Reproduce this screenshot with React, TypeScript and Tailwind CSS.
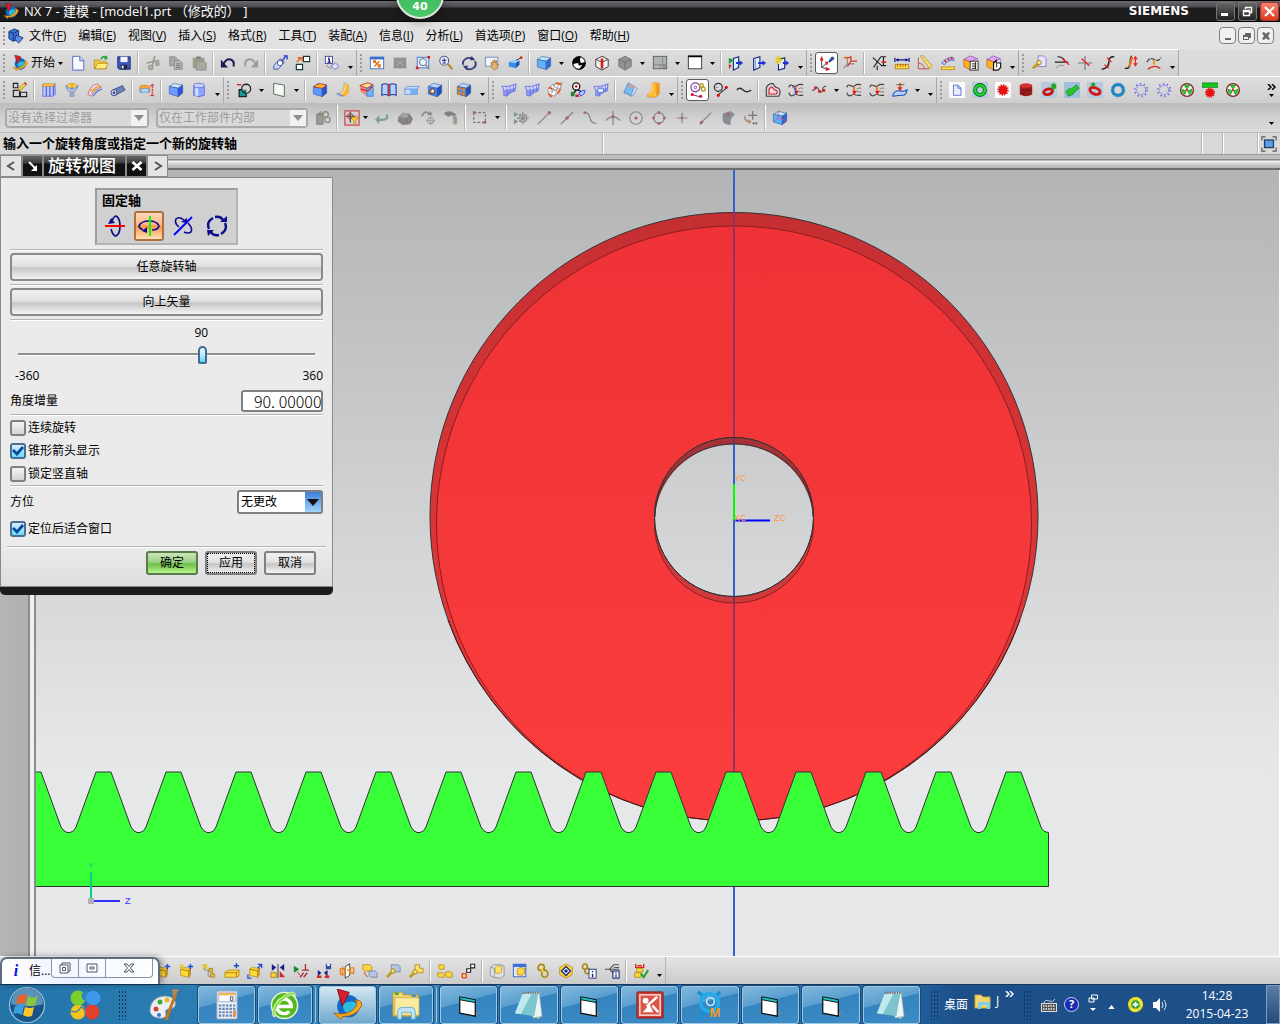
import { useState } from 'react'
import type { ReactNode } from 'react'
import clsx from 'clsx'

const NAVY = '#0c0c8c'

function cube(top: string, left: string, right: string): ReactNode {
  return (
    <g stroke="#2b4f8c" strokeWidth=".6">
      <path d="M1.500 5L7 1.500 16.500 3.500 11.500 7z" fill={top} />
      <path d="M1.500 5L11.500 7V16.500L1.500 13.500z" fill={left} />
      <path d="M11.500 7L16.500 3.500V12.500L11.500 16.500z" fill={right} />
    </g>
  )
}

const magenta3d = (
  <>
    <path d="M1 5L8 1l8 3-7 4z" fill="#d9a6f0" stroke="#8a3ca8" strokeWidth=".7" />
    <path d="M1 5l8 3v9l-8-4z" fill="#ffb51e" stroke="#c43a1a" strokeWidth=".7" />
    <path d="M9 8l7-4v9l-7 4z" fill="#f6e2ee" stroke="#8a3ca8" strokeWidth=".7" />
  </>
)

const surface = (
  <>
    <path d="M1 5q8 1 16-3l-1 8q-6 1-9 6l-4-1q1-6-2-10z" fill="#8f98f6" stroke="#6068e0" strokeWidth=".8" />
    <path d="M2 5.500q8 1 14-2l-.5 3q-7 3-12 2z" fill="#e4e8ff" opacity=".8" />
    <path d="M6 5.500q2 4 1 10M10 5q1 4 0 8M14 4v7" fill="none" stroke="#5058d8" strokeWidth=".7" />
  </>
)

const curveS = (
  <g fill="none">
    <path d="M1 6q1-4 4-2t5 0 7-1M1 12q1 5 5 3t4-1 7 1" stroke="#444" strokeWidth="1.300" />
    <path d="M17 7q-4-1-5 1M17 11q-3 1-6-1" stroke="#777" strokeWidth="1" />
    <path d="M9 5v9" stroke="#f06a1a" strokeWidth="2" />
    <path d="M7 10h5l-2.500 4z" fill="#d11" />
  </g>
)

const dottedGear = (
  <g fill="none" stroke="#6a6af0">
    <circle cx="9" cy="9" r="5.200" strokeDasharray="2 1" />
    <circle cx="9" cy="9" r="7" strokeWidth="2" strokeDasharray="1.600 2.800" />
  </g>
)

const wheel = (
  <>
    <circle cx="9" cy="9" r="7.200" fill="#eef5ee" stroke="#7c2626" strokeWidth="1.500" />
    <path d="M9 8L6 4A6 6 0 0 1 12 4zM10 10l4.500-2a6 6 0 0 1-3 6zM8 10l-1.500 4a6 6 0 0 1-3-6z" fill="#2bc82b" stroke="#1c7a1c" strokeWidth=".6" />
    <circle cx="9" cy="9" r="1.500" fill="#d33" />
  </>
)

const globe = (
  <>
    <circle cx="9.500" cy="10" r="6.500" fill="#1269c7" />
    <path d="M6 9q4-3 8-1 1 4-3 7-4 0-5-6z" fill="#2bbce0" />
    <path d="M1 14q9 2 13-4 1-3-1-3.500 5-.5 4 3.500-3 6-11 6l-1 1.500z" fill="#f6a821" stroke="#a35d09" strokeWidth=".5" />
    <path d="M3 0l7 2-4 8z" fill="#d4202c" stroke="#7d0b16" strokeWidth=".5" />
  </>
)

const yellowBox = (
  <>
    <path d="M3 7l3-2 8 1-2 3zM3 7v7l9 2V9z" fill="#ffd93b" stroke="#a77c0c" strokeWidth=".7" />
    <path d="M12 9l2-3v7l-2 3z" fill="#d9a516" stroke="#a77c0c" strokeWidth=".7" />
  </>
)

const greenDisc = (
  <>
    <rect width="18" height="18" x="0" fill="#b5cbdd" />
    <circle cx="9" cy="9" r="5.500" fill="none" stroke="#0b5f14" strokeWidth="4.500" />
    <circle cx="9" cy="9" r="5.500" fill="none" stroke="#1ddd2e" strokeWidth="2.600" />
  </>
)

const glyphs: Record<string, ReactNode> = {
  nx: globe,
  newDoc: <><path d="M3 1.500h8l4.500 4.500v11H3z" fill="#f7f9ff" stroke="#4c62c4" /><path d="M11 1.500v5h4.500" fill="#cfd8ff" stroke="#4c62c4" /></>,
  open: <><path d="M1.500 15.500v-10h5l1.500 2h7v8z" fill="#f5c93a" stroke="#b38716" strokeWidth=".8" /><path d="M2 15.500l3-6h12l-3 6z" fill="#ffec7d" stroke="#b38716" strokeWidth=".8" /><path d="M9 5q2-5 6-2" fill="none" stroke="#23a53a" strokeWidth="1.800" /><path d="M16 0v5h-4z" fill="#23a53a" /></>,
  save: <><path d="M2 2h14v14H3.500L2 14.500z" fill="#3b55b8" stroke="#1c2b6e" /><path d="M5 2h8v6H5z" fill="#eef3ff" /><path d="M5.500 11h7v5h-7z" fill="#202840" /><path d="M6.500 12h2v3h-2z" fill="#fff" /></>,
  cut: <g stroke="#9b9b90" strokeWidth="2" fill="none"><path d="M11 1L8 13M2 9l14-3" /><circle cx="6.500" cy="14" r="2" /><circle cx="14" cy="10" r="1.600" /></g>,
  copy: <><path d="M2 2h6l3 3v7H2z" fill="#aaa" stroke="#888" /><path d="M7 6h6l3 3v7H7z" fill="#b9b9b9" stroke="#858585" /><path d="M9 10h5M9 12h5M9 14h5" stroke="#777" /></>,
  paste: <><path d="M2 3h13v12H2z" fill="#a09d8d" /><path d="M6 1.500h5v3H6z" fill="#848484" /><path d="M6 7h9l2 2v8H6z" fill="#a9a9a1" stroke="#8f8f86" /></>,
  undo: <><path d="M4 10q3-6 8-5 5 2 3 8" fill="none" stroke="#1c1c58" strokeWidth="2.200" /><path d="M1 5v9h8z" fill="#1c1c58" /></>,
  redo: <><path d="M14 10q-3-6-8-5-5 2-3 8" fill="none" stroke="#9d9d9d" strokeWidth="2.200" /><path d="M17 5v9H9z" fill="#9d9d9d" /></>,
  pencilClip: <><path d="M2 12L9 4l5 4-7 8H2z" fill="#c7d4f5" stroke="#4356a8" /><circle cx="9" cy="9" r="3" fill="#fff" stroke="#4356a8" /><path d="M11 7l5-6M13 1h4v4" fill="none" stroke="#2a44c8" strokeWidth="1.500" /></>,
  squares: <><path d="M9.500 1.500h7v6h-7zM1.500 10.500h7v6h-7z" fill="#fff" stroke="#123c3c" strokeWidth="1.300" /><path d="M2 8l5-5M3 3h5v4" stroke="#e8601c" fill="none" strokeWidth="1.600" /></>,
  info: <><rect x="1.500" y="1.500" width="8" height="8" fill="#fff" stroke="#3d4494" /><path d="M5.500 2.500v1.300M4.500 5h1.500v3M4 8h3.500" stroke="#10107a" fill="none" strokeWidth="1.300" /><path d="M8 12l5-3 4 4-5 3.500z" fill="#dbe0ff" stroke="#6a70b0" /><path d="M3 11q1 4 6 4" stroke="#888" fill="none" /></>,
  fit: <><rect x="1.500" y="2.500" width="15" height="13" fill="#fff" stroke="#3a6fd0" /><path d="M1 2h16v3H1z" fill="#3a6fd0" /><path d="M6 7l6 6M12 7l-6 6M5 6.500h3M5.500 6v3M13 13.500h-3M12.500 13v-3" stroke="#e8741c" strokeWidth="1.600" /></>,
  fitGray: <><rect x="2" y="3" width="14" height="12" fill="#8f9191" /><path d="M5 6l8 6M13 6l-8 6" stroke="#b9b3a3" /></>,
  zoomRect: <><rect x="2.500" y="2.500" width="13" height="12" fill="#dfeaff" stroke="#3a6fd0" /><circle cx="9" cy="8" r="4" fill="#eaf6ff" stroke="#666" /><path d="M12 11l4 5" stroke="#888" strokeWidth="1.500" /><path d="M1 13h3v3H1zM14 1h3v3h-3z" fill="#d22" /></>,
  zoom: <><circle cx="7" cy="6.500" r="5" fill="#e5eefd" stroke="#555a88" strokeWidth="1.200" /><path d="M4.500 6h5M7 3.500v5M5 9h4" stroke="#1c1c7c" /><path d="M11 10l5 6" stroke="#b28b35" strokeWidth="2.300" /></>,
  rotate: <g fill="none" stroke="#2f3c78" strokeWidth="2"><path d="M2.500 11a7 6 0 0 1 10-7M15.500 7a7 6 0 0 1-10 8" /><path d="M12 1l4 5-6 0zM6 17l-4-5 6 0z" fill="#2f3c78" stroke="none" /></g>,
  pan: <><rect x="1.500" y="2.500" width="14" height="10" fill="#f3f6ff" stroke="#7288b8" /><path d="M8 8l2 3V6l1 3 1-4 1 4 1-3v5l2-1-1 5-3 2-4-3z" fill="#e6b574" stroke="#98672a" strokeWidth=".7" /></>,
  perspective: <><path d="M2 8l4-3 8 1-4 3z" fill="#9fd0ff" /><path d="M2 8l8 1v6l-8-2z" fill="#3a8ae6" /><path d="M10 9l4-3v5l-4 4z" fill="#1556b0" /><path d="M10 6l6-3" stroke="#333" /><circle cx="16" cy="3" r="1.500" fill="#d22" /></>,
  cube: cube('#b8e4ff', '#62b2fb', '#2b6fe0'),
  bw: <><circle cx="9" cy="9" r="7.500" fill="#000" /><path d="M11 2a7 7 0 0 1 5 6l-5 1-1-4zM2 10l6-1 1 3 4-1-4 5A7 7 0 0 1 2 10z" fill="#fff" /><circle cx="9" cy="9" r="7" fill="none" stroke="#000" /></>,
  cubeRed: <><path d="M2 5l7-3.500L16 5v8l-7 4-7-4z" fill="#f4f4f4" stroke="#333" /><path d="M2 5l7 3 7-3M9 8v8" fill="none" stroke="#333" /><path d="M7.500 4h3v11h-3z" fill="#d62020" /></>,
  cubeGray: <><path d="M2 5l7-3.500L16 5v8l-7 4-7-4z" fill="#929292" stroke="#777" /><path d="M2 5l7 3 7-3M9 8v8" fill="none" stroke="#727272" /></>,
  layer: <><rect x="1.500" y="1.500" width="15" height="14" fill="#b0b4b3" stroke="#5c5f5e" /><path d="M12 2v9H2M9 15v-4h7" fill="none" stroke="#858886" /><circle cx="13.500" cy="13" r="1.500" fill="#ddd" stroke="#555" /></>,
  frame: <><rect x="1.500" y="1.500" width="15" height="14" fill="#fff" stroke="#333" /><path d="M1 1.500h16" stroke="#000" strokeWidth="2" /></>,
  layerGreen: <><path d="M6 4l6-2v12l-6 3z" fill="#dfeeff" stroke="#12246e" strokeWidth="1.200" /><path d="M1 3l5 3-5 4z" fill="#1b9a36" /><path d="M1 10l3 2-3 4z" fill="#d22" /><path d="M9 8h4V6l4 3-4 3v-2H9z" fill="#1c30d8" /></>,
  layerBlue: <><path d="M3 4l7-2v12l-7 3z" fill="#dfeeff" stroke="#12246e" strokeWidth="1.200" /><path d="M5 5v10" stroke="#7a93d8" /><path d="M8 8h5V6l4 3-4 3v-2H8z" fill="#1c30d8" /></>,
  layerStar: <><path d="M5 5l7-2v12l-7 2z" fill="#dfeeff" stroke="#12246e" strokeWidth="1.200" /><path d="M5 1v9M1 5.500h9M2 2l6 7M8 2L2 9" stroke="#e0cf12" strokeWidth="1.300" /><path d="M10 8h3V6l4 3-4 3v-2h-3z" fill="#1c30d8" /></>,
  csysBrush: <><path d="M3 4v10l7 2M3 14l6-5" fill="none" stroke="#333" /><path d="M1.500 6L3 2l1.500 4zM8 14l4 2-4 1.500zM7 8l3 0-1 3z" fill="#d22" stroke="#d22" /><path d="M11 7l4-5 2 2-5 4z" fill="#2553c8" stroke="#12246e" /></>,
  csysRed: <><path d="M6 4v6h8M6 10l-4 5" fill="none" stroke="#888" strokeWidth="1.300" /><path d="M10 1v6h7M10 7l-4 6M2 3h8" stroke="#e0341c" fill="none" strokeWidth="1.400" /><path d="M2 3l3-2v4z" fill="#f08a1c" /></>,
  xMeasure: <g stroke="#222" fill="none" strokeWidth="1.300"><path d="M2 3l10 9M11 2L3 14M14 2v10M11 2h6M11 12h6" /><path d="M12 8h5" stroke="#d22" strokeWidth="2" /><path d="M7 12v5" /></g>,
  ruler: <><path d="M1 3v5M17 3v5M2 5.500h14" stroke="#12128c" strokeWidth="1.300" /><path d="M2 5.500l3-2v4zM16 5.500l-3-2v4z" fill="#12128c" /><rect x="1.500" y="10.500" width="15" height="5" fill="#ffe24a" stroke="#c47c12" /><path d="M4 10.500v3M7 10.500v3M10 10.500v3M13 10.500v3" stroke="#a35610" /></>,
  triangle: <><path d="M1.500 3v12.500H14M1.500 9q6 1 7 6.500" fill="none" stroke="#c04040" /><path d="M4 1l2-1 11 12-3 3z" fill="#ffe261" stroke="#a8842a" strokeWidth=".8" /></>,
  arcRuler: <><path d="M2 9q5-7 13-6l1 3Q9 5 5 11z" fill="#bdd0ff" stroke="#2b55c4" strokeWidth=".8" /><path d="M5 6l2 2M9 4l1 2M13 2l0 3" stroke="#d22" strokeWidth="2" /><rect x="1.500" y="13.500" width="15" height="3" fill="#ffe24a" stroke="#c47c12" strokeWidth=".8" /></>,
  boxA: <>{magenta3d}<rect x="8" y="7" width="9" height="10" fill="#fff" stroke="#222" /><path d="M10 10h5M10 12.500h5M10 15h5M14 8v8" stroke="#111" /></>,
  boxB: <>{magenta3d}<path d="M8.500 9l3-3v3h5v5l-3 3h-5z" fill="#fff" stroke="#111" strokeWidth="1.300" /><path d="M12 10v4" stroke="#111" /></>,
  keyDoc: <><path d="M8 1h6l3 3v9H8z" fill="#e8e4ff" stroke="#8878c8" /><path d="M2 15l6-5" stroke="#c49a1c" strokeWidth="3" /><circle cx="9" cy="8.500" r="2.500" fill="#f7df74" stroke="#a87c12" /></>,
  curve1: <g fill="none"><path d="M4 2q7 0 9 6M1 8h15" stroke="#222" strokeWidth="1.300" /><path d="M2 15q4-5 9-3" stroke="#888" /><path d="M9 4l8 7" stroke="#e22" strokeWidth="1.500" /></g>,
  cross: <g fill="none"><path d="M9 1v16M1 9h16" stroke="#777" strokeWidth="1.300" /><path d="M5 4l9 8" stroke="#e22" strokeWidth="1.500" /></g>,
  curve2: <g fill="none"><path d="M16 2q-6-1-6 6t-8 8" stroke="#222" strokeWidth="1.700" /><path d="M8 3l5 5M5 11l5 4" stroke="#e22" strokeWidth="1.500" /></g>,
  curve3: <g fill="none"><path d="M2 15q6 1 6-6t2-8" stroke="#222" strokeWidth="1.500" /><path d="M10 2q-1 9-4 11" stroke="#e8741c" strokeWidth="2.500" /><path d="M14 3v8M12 5l2-3 2 3M12 9l2 3 2-3" stroke="#e22" strokeWidth="1.300" /></g>,
  curve4: <g fill="none"><path d="M1 8q3-6 8-3t8-2" stroke="#444" strokeWidth="1.400" strokeDasharray="5 1" /><path d="M2 16q7-6 14-1" stroke="#d22" strokeWidth="1.500" /><path d="M9 6v5" stroke="#e8a01c" strokeWidth="2.500" /></g>,
  sketch: <><path d="M1.500 1.500h5v5h-5zM1.500 9.500h7v7h-7zM9.500 11.500h7v5h-7z" fill="none" stroke="#222" strokeWidth="1.300" /><path d="M7 10l1-3 6-6 2 2-6 6z" fill="#ffd93b" stroke="#8a6a12" strokeWidth=".8" /><path d="M13 1l2-1 2 2-1 2z" fill="#e04030" /></>,
  extrude: <><path d="M2 3h12l2-1v12l-3 2H2z" fill="#b9c6ff" stroke="#5060d0" strokeWidth=".8" /><path d="M2 2h13v3H2z" fill="#ffc34a" stroke="#c8821c" strokeWidth=".7" /><path d="M6 5v11M10 5v11M14 4v11" stroke="#5060d0" strokeWidth="1.300" /></>,
  revolve: <><path d="M3 4q6-5 12 0l-1 4H4z" fill="#ffcc44" stroke="#d08a20" strokeWidth=".8" /><path d="M2 4q1 6 5 7v5h4v-5q4-2 5-7l-4 3H6z" fill="#a9c9ff" stroke="#3a6fd0" strokeWidth=".7" /><path d="M9 2v13" stroke="#e8741c" /></>,
  sweep: <><path d="M1 14Q4 3 12 2l4 4Q9 7 5 16z" fill="#f0d8e4" stroke="#c05468" strokeWidth=".8" /><path d="M5 12Q9 5 15 4M2 9l11 0" fill="none" stroke="#e8a028" strokeWidth="1.300" /><path d="M7 16q4-7 10-8" fill="none" stroke="#5a78e0" strokeWidth="1.300" /></>,
  tube: <><path d="M3 9L14 4l3 5-11 6z" fill="#6a82b8" stroke="#2a3a78" strokeWidth=".8" /><ellipse cx="4.500" cy="12" rx="3.300" ry="3.500" fill="#dfe8ff" stroke="#2a3a78" /><ellipse cx="4.500" cy="12" rx="1.500" ry="1.700" fill="#33426e" /></>,
  thicken: <><path d="M1 5q5-3 11 0v6q-6-3-11 0z" fill="#ffa63a" stroke="#b8701a" strokeWidth=".7" /><path d="M2 8q5-2 9 0v4q-5-2-9 0z" fill="#b3dcff" stroke="#3a7fd0" strokeWidth=".7" /><path d="M15 2v14M13 4h4M13 15h4" stroke="#d22" strokeWidth="1.300" strokeDasharray="2 1" /></>,
  block: cube('#cfe2ff', '#6a9cff', '#2b55e0'),
  cylinder: <><path d="M3 4v11q6 3 12 0V4z" fill="#8fa8ff" stroke="#4a5ed0" strokeWidth=".8" /><path d="M5 5v11h3V5z" fill="#e6ecff" opacity=".8" /><ellipse cx="9" cy="4" rx="6" ry="2.500" fill="#c5d2ff" stroke="#4a5ed0" strokeWidth=".8" /></>,
  boolean: <><path d="M1 3h5" stroke="#d22" strokeWidth="1.500" /><rect x="3.500" y="8.500" width="8" height="8" fill="#159a94" stroke="#111" strokeWidth="1.200" /><circle cx="11.500" cy="7.500" r="5" fill="none" stroke="#222" strokeWidth="1.500" /><path d="M7 8.500h5v4" fill="none" stroke="#ddd" /></>,
  plane: <path d="M3 1.500l12 2v13l-12-3z" fill="#f4faf4" stroke="#555c55" />,
  edge1: <>{cube('#ffe9c8', '#5a9bff', '#2555d0')}<path d="M3 6q1-4 6-4l7 1-4 4z" fill="#ffb23a" stroke="#c02a1a" strokeWidth=".8" /></>,
  flange: <><path d="M10 1l5 2v9l-4 4-9-3 5-1q4-3 3-11z" fill="#f5dc9c" stroke="#b8943a" strokeWidth=".7" /><path d="M12 3q1 8-5 11l4 2 4-4V4z" fill="#ffb524" /><path d="M2 13l7 3" stroke="#7a90e8" strokeWidth="2" /></>,
  draft: <><path d="M2 4l9-3 6 2-7 4z" fill="#ffe08a" stroke="#c02a1a" /><path d="M2 4l8 3v9l-7-5z" fill="#f04e2a" opacity=".5" /><path d="M10 7l7-3v12l-7 0z" fill="#6fb4ff" stroke="#2b6fd0" strokeWidth=".8" /><path d="M3 8l8 2 5-5" fill="none" stroke="#d22" strokeWidth="1.400" /></>,
  book: <><path d="M1 3q4-2 7 0v12q-3-2-7 0zM17 3q-4-2-7 0v12q3-2 7 0z" fill="#b6d0ff" stroke="#1c3a9c" strokeWidth="1.200" /><path d="M9 2v14" stroke="#d22" strokeWidth="2.200" strokeDasharray="2 1" /></>,
  ruled: <><path d="M1 7l3-2h13l-2 3v6H1z" fill="#bfdcff" stroke="#5a8ad8" strokeWidth=".8" /><path d="M1 8h14M8 8v6" stroke="#5a8ad8" /><path d="M9 8h6v6H9z" fill="#6fb0f6" /></>,
  hole: <>{cube('#bcd6ff', '#4f8cf5', '#1f4fc4')}<circle cx="6" cy="10.500" r="3" fill="#ff9a2a" stroke="#12308c" /><circle cx="6.500" cy="10" r="1.300" fill="#fff" /></>,
  pattern: <>{cube('#bcd6ff', '#5a98ff', '#1f4fc4')}<path d="M2 6h3v3H2zM7 7h3v3H7zM2 11h3v3H2zM7 12h3v3H7z" fill="#ff9a2a" stroke="#a8560c" strokeWidth=".6" /></>,
  surf: surface,
  mesh: <><path d="M1 8l5-5 11-2-3 9-5 6-7-2z" fill="#fff" stroke="#666" strokeWidth=".7" /><path d="M3 11l11-4M4 6l8 5M6 3l7 5M9 3l-4 11M13 3L9 15" stroke="#777" strokeWidth=".7" /><path d="M2 6l4 2M10 1l6 2M2 13l3 4M12 13l3-5" stroke="#e8501c" strokeWidth="2" /></>,
  nodes: <><circle cx="7" cy="5" r="4" fill="#fff" stroke="#111" strokeWidth="1.500" /><circle cx="7" cy="5" r="1.500" fill="#d22" /><path d="M7 9l-3 4M9 9l4 2" stroke="#111" strokeWidth="1.500" /><path d="M1 11h4v5H1z" fill="#1b8a36" /><path d="M6 14h4v3H6z" fill="#d22" /><path d="M10 12l6-3 1 3-5 4z" fill="#c4ccff" stroke="#23f" /></>,
  surf2: <>{surface}<rect x="5" y="7" width="7" height="5" rx="2" fill="#dfeaff" stroke="#4a70d0" /></>,
  blade: <><path d="M7 1l7 4-3 11-9-4z" fill="#7db8f0" stroke="#3a6fb0" strokeWidth=".7" /><path d="M14 5l3 2-4 8-3 1z" fill="#c4dcf4" stroke="#6a8ab8" strokeWidth=".7" /><path d="M9 2l5 3-2 2-4-2z" fill="#e89a7a" /></>,
  foot: <><path d="M8 1h8v13l-4 3H3v-3l4-4z" fill="#ffbb2e" stroke="#d88812" strokeWidth=".7" /><path d="M8 1v9l-4 4M12 12v4" fill="none" stroke="#fff0b8" /><path d="M12 2h4v11l-4 3z" fill="#f08c1c" opacity=".7" /></>,
  sketchC: <><circle cx="6" cy="6" r="5" fill="none" stroke="#7a3ca8" strokeWidth="1.400" /><circle cx="6" cy="6" r="1.500" fill="none" stroke="#7a3ca8" /><path d="M2 14l10 3" stroke="#7a3ca8" strokeWidth="1.200" /><circle cx="2.500" cy="14" r="1.700" fill="#d11" /><circle cx="12" cy="16" r="1.700" fill="#d11" /><g fill="none" stroke="#b09c12" strokeWidth="1.500"><circle cx="13" cy="4" r="2" /><circle cx="15" cy="8" r="2.200" /></g></>,
  lineC: <><circle cx="6" cy="6" r="4.500" fill="none" stroke="#333" strokeWidth="1.400" /><path d="M5 15l11-9" stroke="#333" strokeWidth="1.200" /><circle cx="6" cy="15" r="1.800" fill="#d11" /><circle cx="15" cy="6" r="1.800" fill="#d11" /><path d="M3 6h3" stroke="#888" /></>,
  wave: <path d="M1 9q3-4 7 0t9 0" fill="none" stroke="#333" strokeWidth="1.700" />,
  offset: <><path d="M1.500 16V6q3-5 8-4 1 4 6 5 3 4 0 9z" fill="none" stroke="#444" strokeWidth="1.300" /><path d="M4.500 13.500V8q2-3 4-2 1 3 5 4 1 2-1 3.500z" fill="#f6d8d8" stroke="#d02838" strokeWidth="1.300" /></>,
  proj: <>{curveS}<path d="M5 5q5 3 3 9" fill="none" stroke="#5a3ac8" strokeWidth="1.400" /></>,
  zigzag: <><path d="M1 9q3 1 4-2t4 2 4 0 4-4" fill="none" stroke="#555" strokeWidth="1.300" /><path d="M3.500 5h3v3h-3zM8 9h3v3H8zM13 8h3v3h-3z" fill="#d2241c" /></>,
  curveS,
  projBlue: <><path d="M1 14q3-5 8-4t8-1q-1 6-5 6t-11 1z" fill="#b7d4ff" stroke="#1c50b8" strokeWidth="1.200" /><path d="M9 1v6" stroke="#e8741c" strokeWidth="2.500" /><path d="M6 6h6l-3 4z" fill="#d22" /><path d="M5 3h9" stroke="#555" /></>,
  docWhite: <><rect width="18" height="18" fill="#fafafa" /><path d="M5 3.500h5l3.500 3.500v8H5z" fill="#e8ecff" stroke="#5a6ad0" /><path d="M10 3.500V7h3.500" fill="none" stroke="#5a6ad0" /></>,
  greenRing: greenDisc,
  redGear: <><rect width="18" height="18" fill="#fafafa" /><circle cx="9" cy="9" r="5" fill="#e01414" /><circle cx="9" cy="9" r="5.500" fill="none" stroke="#e01414" strokeWidth="2" strokeDasharray="1.500 1.300" /></>,
  redCyl: <><path d="M2 4v10q7 4 14 0V4z" fill="#9c1c1c" /><ellipse cx="9" cy="4" rx="7" ry="2.500" fill="#d43030" /><path d="M5 8l3 3 3-3 3 3M4 12l4 2" stroke="#5e0c0c" fill="none" /></>,
  redTorus: <><rect width="18" height="18" fill="#b5cbdd" /><ellipse cx="8" cy="11" rx="5" ry="3" fill="none" stroke="#c81414" strokeWidth="3.300" transform="rotate(-14 8 11)" /><path d="M11 4l3-3 3 2v4l-4 2z" fill="#22aa22" /></>,
  greenCyl: <><rect width="18" height="18" fill="#9fc0dc" /><path d="M2 11l4-4 2 1 6-5 3 4-6 5-1 2-5 2z" fill="#27c42b" stroke="#12801a" strokeWidth=".8" /></>,
  redTorus2: <><rect width="18" height="18" fill="#b5cbdd" /><ellipse cx="9" cy="10" rx="6" ry="3.500" fill="none" stroke="#d41414" strokeWidth="3.300" transform="rotate(22 9 10)" /><circle cx="7" cy="3" r="2.300" fill="#22aa22" /></>,
  blueRing: <><circle cx="9" cy="9" r="6" fill="none" stroke="#1f86c4" strokeWidth="3.500" /><circle cx="9" cy="9" r="7.800" fill="none" stroke="#1f86c4" strokeDasharray="1.500 1.500" /></>,
  dottedGear,
  wheel,
  rackGear: <><rect y="1" width="18" height="5" fill="#16c41f" stroke="#0c7a14" strokeWidth=".7" /><circle cx="9" cy="12" r="4.500" fill="#e81414" /><circle cx="9" cy="12" r="5" fill="none" stroke="#e81414" strokeWidth="1.500" strokeDasharray="1.300 1.300" /></>,
  chainGray: <g fill="none" stroke="#8f8f80" strokeWidth="1.600"><rect x="2" y="5" width="7" height="11" fill="#9a9a9a" stroke="#777" strokeWidth="1" /><path d="M6 1v7M3 4h6" /><circle cx="12" cy="5" r="3" /><circle cx="14" cy="11" r="3" /></g>,
  selFilter: <><rect x="1" y="1" width="16" height="16" fill="#d6cfd2" stroke="#cc3f4c" strokeWidth="1.300" /><path d="M7 2v12M2 7h11" stroke="#333" strokeWidth="1.200" /><circle cx="7" cy="7" r="3" fill="none" stroke="#b33" /><path d="M8 8h8l-3 4v4l-2-1v-3z" fill="#ffd21e" stroke="#a87c12" strokeWidth=".7" /></>,
  back: <><path d="M14 5q3 6-5 6H5" fill="none" stroke="#84a094" strokeWidth="2.500" /><path d="M6 6v10L1 11z" fill="#84a094" /></>,
  solidGray: <><path d="M1 9l5-6 8 1 4 6-3 6-9 1-5-4z" fill="#858585" /><path d="M6 3l8 1-3 5-8-1z" fill="#a2a2a2" /><path d="M11 9v7" stroke="#a06a6a" strokeWidth="1.500" /></>,
  arrowTarget: <><path d="M2 7q4-8 9-2" fill="none" stroke="#888" strokeWidth="2" /><path d="M8 6h6l-2-5z" fill="#888" /><circle cx="12" cy="12" r="3.500" fill="none" stroke="#a67a7a" /><path d="M12 7v10M7 12h10" stroke="#999" /></>,
  hand: <><path d="M1 4q4-4 9-2l5 3-2 2-4-1-3 2z" fill="#7f7f7f" /><path d="M11 8h5v8h-5z" fill="#b5ab83" /><path d="M11 8h3v8" fill="none" stroke="#8a93a8" strokeWidth="2" /></>,
  dashRect: <><rect x="2" y="3" width="13" height="11" fill="none" stroke="#555" strokeDasharray="3 2" /><path d="M1 1.500h3v3H1zM13 12.500h3v3h-3z" fill="#a86868" /></>,
  snapMove: <><path d="M1 2l5 3-5 3zM1 10l5 3-5 3z" fill="#7d9a84" /><path d="M11 2v14M4 9h14M7 5l8 8M15 5l-8 8" stroke="#8a8a8a" strokeWidth="1.200" /><circle cx="11" cy="9" r="4.500" fill="none" stroke="#8a8a8a" strokeWidth="1.300" strokeDasharray="3 1" /></>,
  snapEnd: <><path d="M2 16L15 3" stroke="#888" strokeWidth="1.400" /><circle cx="15" cy="3" r="2" fill="#a86868" /></>,
  snapMid: <><path d="M2 16L16 2" stroke="#888" strokeWidth="1.400" /><circle cx="9" cy="9" r="2" fill="#a86868" /></>,
  snapCurve: <><path d="M3 3q5 0 6 6t7 6" fill="none" stroke="#888" strokeWidth="1.500" /><circle cx="3" cy="3" r="1.500" fill="#a86868" /></>,
  snapCross: <><path d="M9 1v16M1 12q8-9 16 0" fill="none" stroke="#888" strokeWidth="1.400" /><circle cx="9" cy="7.500" r="1.800" fill="#a86868" /></>,
  snapCenter: <><circle cx="9" cy="9" r="7" fill="none" stroke="#888" strokeWidth="1.300" /><circle cx="9" cy="9" r="1.800" fill="#a86868" /></>,
  snapQuad: <><circle cx="9" cy="9" r="6" fill="none" stroke="#888" strokeWidth="1.300" /><path d="M7.500 1.500h3v3h-3zM7.500 13.500h3v3h-3zM1.500 7.500h3v3h-3zM13.500 7.500h3v3h-3z" fill="#a86868" /></>,
  snapPlus: <><path d="M9 3v12M3 9h12" stroke="#888" strokeWidth="1.400" /><circle cx="9" cy="9" r="1.500" fill="#a86868" /></>,
  snapOn: <><path d="M3 16L16 3" stroke="#888" strokeWidth="1.400" /><circle cx="5" cy="14" r="1.800" fill="#a86868" /></>,
  snapFace: <><path d="M3 4l9-3 5 4q-6 3-5 12-8-1-9-5z" fill="#878d94" /><circle cx="9" cy="5" r="2" fill="#a86868" /></>,
  snapPoint: <><path d="M11 1v10M6 6h10" stroke="#777" strokeWidth="1.400" /><path d="M2 7q0 6 5 6" fill="none" stroke="#b08e78" strokeWidth="2" /><path d="M6 10v6l4-3z" fill="#b08e78" /><path d="M11 15h2M14 15h2" stroke="#555" strokeWidth="2" /></>,
  cubePink: <>{cube('#bfe3ff', '#58b4fa', '#2a62e0')}<path d="M7 1v8l9 3M7 9l-5 4" fill="none" stroke="#e04888" strokeWidth=".9" /></>,
  fullView: <><path d="M1 5V1h4M13 1h4v4M17 13v4h-4M5 17H1v-4" fill="none" stroke="#555" strokeWidth="1.300" /><rect x="4" y="4.500" width="10" height="8.500" fill="#5aa0e8" stroke="#2a3f60" strokeWidth="1.500" /></>,
  asmAdd: <>{yellowBox}<path d="M14 1v6M11 4h6" stroke="#1f4fd0" strokeWidth="1.600" /></>,
  asmStar: <>{yellowBox}<path d="M14 1v6M11 4h6" stroke="#1f4fd0" strokeWidth="1.600" /><path d="M2 2l4 4M6 2L2 6M4 1v6" stroke="#e8c81c" strokeWidth="1.200" /></>,
  asmTree: <><path d="M4 2v6h8M8 8v7h5" fill="none" stroke="#888" /><path d="M1 2l6 4M7 1L2 7" stroke="#e8c81c" strokeWidth="1.800" /><path d="M9 6h4v4H9zM11 12h4v4h-4z" fill="#e8c44a" stroke="#a77c0c" /></>,
  asmFlat: <><path d="M1 11l4-3 12 0v6l-3 2H1z" fill="#ffd93b" stroke="#a77c0c" strokeWidth=".8" /><path d="M1 11h13l3-3M14 11v5" fill="none" stroke="#a77c0c" /><path d="M14 0v6M11 3h6" stroke="#1f4fd0" strokeWidth="1.600" /></>,
  asmMove: <>{yellowBox}<path d="M12 6l4-4M12 1.500h4.500V6M1 13v4h4" fill="none" stroke="#1f4fd0" strokeWidth="1.500" /></>,
  mirror: <><path d="M2 1l5 4-5 4zM16 1l-5 4 5 4z" fill="#1c1c8c" /><path d="M9 1v16" stroke="#333" /><path d="M1 11h6v5H1z" fill="#ffd93b" stroke="#a77c0c" /><path d="M11 9l6 7h-6z" fill="#d9242c" /></>,
  constrain: <><path d="M1 3l6 4-6 4z" fill="#188a28" /><path d="M14 1v7M10 8h8M8 16l4-5M12 16l4-5" stroke="#a33" strokeWidth="1.500" /><path d="M5 10l3 4" stroke="#a33" /></>,
  mirrorSave: <><path d="M2 8l4 3-4 4zM13 8l-4 3 4 4z" fill="#1c1c8c" /><path d="M1 14h5v3H1zM10 14h5v3h-5z" fill="#d9242c" /><rect x="11" y="1" width="6" height="6" fill="#33489c" /><path d="M12.500 1h3v2.500h-3z" fill="#fff" /></>,
  section: <><path d="M7 4l5-3v13l-5 3z" fill="#fff" stroke="#333" /><path d="M1.500 6.500h5v6h-5zM12.500 5.500h4v6h-4zM4 4v11M9 8h5" fill="none" stroke="#e8861c" strokeWidth="1.500" /></>,
  asmTwo: <><path d="M1 2h8l2 2v5H3L1 7z" fill="#ffd93b" stroke="#a77c0c" strokeWidth=".8" /><path d="M8 9h7l2 2v5h-7l-2-2z" fill="#b8c6e4" stroke="#6478a8" strokeWidth=".8" /><path d="M3 10q0 5 4 5" fill="none" stroke="#c9301c" /></>,
  wrenchBox: <><path d="M7 2h8l2 2v6H9L7 8z" fill="#b8c6e4" stroke="#6478a8" strokeWidth=".8" /><path d="M2 16l6-6" stroke="#c49a1c" strokeWidth="3" /><circle cx="9" cy="9" r="2.500" fill="#f7df74" stroke="#a87c12" /></>,
  wrenchY: <><path d="M8 2h5v4h4v5H8z" fill="#ffe261" stroke="#a77c0c" strokeWidth=".8" /><path d="M2 16l6-6" stroke="#c49a1c" strokeWidth="3" /><circle cx="8" cy="10" r="2.500" fill="#f7df74" stroke="#a87c12" /></>,
  asmThree: <g fill="#ffd93b" stroke="#a77c0c" strokeWidth=".8"><path d="M2 2h5l1 1v4H3L2 6zM1 11h6l1 1v4H2l-1-1zM10 10h6l1 1v5h-6l-1-1z" /></g>,
  pathSq: <g strokeWidth="1.200"><path d="M12 1.500h4.500v4H12z" fill="#fff" stroke="#222" /><path d="M7.500 6.500H12v4H7.500z" fill="#fff" stroke="#222" /><path d="M2.500 12H7v4.500H2.500z" fill="#ffe261" stroke="#d22" /></g>,
  boxGhost: <><path d="M1.500 5l4-3h8L17 4v10l-4 3-8-1-3.500-2z" fill="#e0e3e6" stroke="#8a9098" /><path d="M2 5l4 1v10" fill="none" stroke="#8a9098" /><path d="M7 5l2-2 5 1v6l-2 2-5-1z" fill="#ffe261" stroke="#b8941c" strokeWidth=".8" /></>,
  boxWindow: <><rect x="1.500" y="1.500" width="14" height="14" fill="#dfe8ff" stroke="#3a5cc0" /><path d="M1 1h15v3.500H1z" fill="#3a6fe0" /><path d="M6 7l3-2 5 1v6l-3 2-5-1z" fill="#ffd93b" stroke="#a77c0c" strokeWidth=".8" /></>,
  chain: <g fill="none" stroke="#a88610" strokeWidth="1.800"><ellipse cx="7" cy="5" rx="3.500" ry="3.500" /><ellipse cx="11" cy="12" rx="3.500" ry="4" /><path d="M6 5l5 7" stroke="#f3da52" /></g>,
  hexGem: <><path d="M2 5l7-4 7 4v8l-7 4-7-4z" fill="#ffd93b" stroke="#c4861c" /><path d="M4 9l5-5 5 5-5 5z" fill="#fff" stroke="#1c2c7c" strokeWidth="1.500" /><circle cx="9" cy="9" r="2" fill="#1c2c9c" /></>,
  chainInfo: <><g fill="none" stroke="#a88610" strokeWidth="1.700"><ellipse cx="4.500" cy="4" rx="2.800" ry="3" /><ellipse cx="7" cy="9" rx="2.800" ry="3" /></g><rect x="9" y="7" width="8" height="10" fill="#fff" stroke="#1c2c7c" /><path d="M13 9v1.500M13 12v4" stroke="#1c2c7c" strokeWidth="1.800" /></>,
  treeInfo: <><path d="M1 7h5M17 2h-6L6 7l5 5M6 7h11M11 5h6" fill="none" stroke="#555" strokeWidth="1.200" /><rect x="10" y="9" width="7" height="8" fill="#fff" stroke="#1c2c7c" strokeWidth="1.300" /><path d="M13.500 10.500V12M13.500 13v3" stroke="#1c2c7c" strokeWidth="1.500" /></>,
  checkBox: <><path d="M3 1v4h9V1M5 3h5" fill="none" stroke="#d22" strokeWidth="1.500" /><path d="M4 6h7v4H4zM2 11h7v5H2z" fill="#ffd93b" stroke="#a77c0c" strokeWidth=".8" /><path d="M9 12l3 4 5-8" fill="none" stroke="#1aa82c" strokeWidth="2.200" /></>,
}

function Glyph({ name }: { name: string }) {
  return (
    <svg viewBox="0 0 18 18" className="h-4 w-4 shrink-0" aria-hidden="true">
      {glyphs[name]}
    </svg>
  )
}

function Caret() {
  return (
    <svg viewBox="0 0 5 3" className="h-[3px] w-[5px]" aria-hidden="true">
      <path d="M0 0h5L2.500 3z" fill="#000" />
    </svg>
  )
}

// '|' is a separator, 'v' a drop-down arrow, '>' the overflow arrow, '!' marks a pressed tool
function Tools({ items }: { items: string }) {
  return (
    <>
      {items.split(' ').map((item, i) => {
        if (item === '|') {
          return (
            <span key={i} className="flex h-full w-[6px] shrink-0 justify-center py-[2px]">
              <span className="w-[2px] border-l border-[#b4b4b4] bg-white" />
            </span>
          )
        }
        if (item === 'v') {
          return (
            <button key={i} aria-label="more" className="flex h-full w-3 shrink-0 items-center justify-center">
              <Caret />
            </button>
          )
        }
        if (item === '>') {
          return (
            <button key={i} aria-label="toolbar options" className="flex h-full w-[14px] shrink-0 items-end justify-center pb-[7px]">
              <Caret />
            </button>
          )
        }
        const pressed = item.startsWith('!')
        const name = pressed ? item.slice(1) : item
        return (
          <button
            key={i}
            aria-label={name}
            className={clsx(
              'flex h-[22px] w-[23px] shrink-0 items-center justify-center rounded-[3px]',
              pressed && 'border border-[#5a5a5a] bg-white',
            )}
          >
            <Glyph name={name} />
          </button>
        )
      })}
    </>
  )
}

function Grip() {
  return (
    <span className="flex h-full w-2 shrink-0 items-center justify-center">
      <span className="h-[18px] border-l-2 border-dotted border-[#9a9a9a]" />
    </span>
  )
}

function ToolGroup({ items, last, children }: { items: string; last?: boolean; children?: ReactNode }) {
  return (
    <div
      className={clsx(
        'flex h-full items-center border-t border-white bg-gradient-to-b from-[#dedede] to-[#cecece]',
        last ? 'flex-1' : 'shadow-[inset_-1px_0_0_#a8a8a8]',
      )}
    >
      <Grip />
      {children}
      <Tools items={items} />
    </div>
  )
}

const menus = [
  ['文件', 'F'], ['编辑', 'E'], ['视图', 'V'], ['插入', 'S'], ['格式', 'R'], ['工具', 'T'],
  ['装配', 'A'], ['信息', 'I'], ['分析', 'L'], ['首选项', 'P'], ['窗口', 'O'], ['帮助', 'H'],
]

function TitleBar() {
  return (
    <header className="relative flex h-[22px] items-center border-y border-black bg-[linear-gradient(#6a6a70,#4a4a50_6px,#1c1c1c_7px,#1c1c1c)] pl-[3px] pr-[1px]">
      <Glyph name="nx" />
      <h1 className="ml-[5px] flex-1 whitespace-pre text-[13px] leading-[18px] text-white">NX 7 - 建模 - [model1.prt （修改的） ]</h1>
      <span className="mr-[27px] font-['DejaVu_Sans',sans-serif] text-[12px] leading-[18px] font-bold text-white">SIEMENS</span>
      <div className="flex gap-[3px]">
        <button aria-label="Minimize" className="flex h-[19px] w-[19px] items-center justify-center rounded-[3px] border border-[#777] bg-gradient-to-b from-[#666] to-[#222]">
          <svg viewBox="0 0 11 11" className="h-[11px] w-[11px]"><path d="M1 7h7v3H1z" fill="#fff" /></svg>
        </button>
        <button aria-label="Restore" className="flex h-[19px] w-[19px] items-center justify-center rounded-[3px] border border-[#777] bg-gradient-to-b from-[#666] to-[#222]">
          <svg viewBox="0 0 11 11" className="h-[11px] w-[11px]"><path d="M3.500 3V1.500h6v5H8M1.500 4.500h6v5h-6zM1.500 5.500h6" fill="none" stroke="#fff" strokeWidth="1.400" /></svg>
        </button>
        <button aria-label="Close" className="flex h-[19px] w-[19px] items-center justify-center rounded-[3px] border border-[#a33] bg-gradient-to-b from-[#f4836c] to-[#dd3a18]">
          <svg viewBox="0 0 11 11" className="h-[11px] w-[11px]"><path d="M1 1l9 9M10 1l-9 9" stroke="#fff" strokeWidth="2" /></svg>
        </button>
      </div>
      {/* Score bubble that hangs over the title bar */}
      <div className="absolute left-[396px] top-[-30px] z-20 flex h-12 w-12 items-end justify-center rounded-full border-2 border-[#dfe5df] bg-gradient-to-b from-[#2faf4f] to-[#4cc86c] pb-[4px] font-['DejaVu_Sans',sans-serif] text-[11px] leading-[12px] font-bold text-white shadow-[0_3px_8px_#0005]">
        40
      </div>
    </header>
  )
}

function MenuBar() {
  return (
    <nav className="flex h-[27px] items-center bg-[#e2e2e2] pr-[6px]">
      <Grip />
      <svg viewBox="0 0 18 18" className="h-4 w-4" aria-hidden="true">
        <path d="M1 4l6-3 5 2v9l-6 3-5-3z" fill="#3d74dc" stroke="#12306e" />
        <path d="M1 4l5 2 6-3M6 6v9" fill="none" stroke="#12306e" />
        <path d="M9 8l8 3-5 6-4-4z" fill="#5d8fe8" stroke="#12306e" />
      </svg>
      <div className="ml-[5px] flex flex-1 gap-3 text-[12px]">
        {menus.map(([label, key]) => (
          <button key={key} className="whitespace-nowrap">
            {label}(<span className="underline">{key}</span>)
          </button>
        ))}
      </div>
      <div className="flex gap-[2px]">
        {['M3 8h6v2H3z', 'M4 3h6v5H8v2H2V5h2zM3 7h4v2H3z', 'M2 3l2-1 2 2 2-2 2 1-2 3 2 3-2 1-2-2-2 2-2-1 2-3z'].map((d, i) => (
          <button key={i} aria-label={['Minimize', 'Restore', 'Close'][i] + ' model'} className="flex h-[17px] w-[17px] items-center justify-center rounded-[4px] border border-[#808080] bg-[#f0f0f0]">
            <svg viewBox="0 0 12 12" className="h-3 w-3 shrink-0"><path d={d} fill="#666" fillRule="evenodd" /></svg>
          </button>
        ))}
      </div>
    </nav>
  )
}

function FilterSelect({ label, value, className }: { label: string; value: string; className: string }) {
  return (
    <div className={clsx('relative flex h-[20px] rounded-[4px] border-2 border-[#a9a9a9] bg-[#d9d9d9]', className)}>
      <select aria-label={label} disabled className="w-full appearance-none px-[1px] text-[12px] leading-[16px] text-[#9c9c9c]">
        <option>{value}</option>
      </select>
      <svg viewBox="0 0 16 16" className="h-4 w-4 shrink-0 bg-[#f2f2f2]" aria-hidden="true">
        <path d="M3 5h10L8 11z" fill="#8e8e8e" />
      </svg>
    </div>
  )
}

function Toolbars() {
  return (
    <>
      <div className="flex h-[27px] bg-[#dcdcdc]">
        <ToolGroup items="newDoc open save | cut copy paste | undo redo | pencilClip squares | info >">
          <button className="flex items-center text-[12px] whitespace-nowrap">
            <span className="flex w-[23px] justify-center"><Glyph name="nx" /></span>
            <span className="w-[23px]">开始</span>
            <span className="flex w-3 justify-center"><Caret /></span>
          </button>
        </ToolGroup>
        <ToolGroup items="fit fitGray zoomRect zoom rotate pan perspective | cube v bw cubeRed cubeGray v layer v frame v | layerGreen layerBlue layerStar >" />
        <ToolGroup items="!csysBrush csysRed | xMeasure ruler triangle arcRuler boxA boxB >" />
        <ToolGroup items="keyDoc curve1 cross curve2 curve3 curve4 >" />
      </div>
      <div className="flex h-[27px] bg-[#dcdcdc]">
        <ToolGroup items="sketch | extrude revolve sweep tube | thicken | block cylinder >" />
        <ToolGroup items="boolean v plane v | edge1 flange draft book ruled hole | pattern >" />
        <ToolGroup items="surf surf mesh nodes surf2 | blade foot >" />
        <ToolGroup items="!sketchC lineC wave | offset proj zigzag v curveS curveS projBlue v >" />
        <div className="flex min-w-0 flex-1">
          <ToolGroup last items="docWhite greenRing redGear redCyl redTorus greenCyl redTorus2 blueRing dottedGear dottedGear wheel rackGear wheel" />
          <button aria-label="more tools" className="flex w-[17px] shrink-0 flex-col items-center justify-center gap-1 border-t border-white bg-gradient-to-b from-[#dedede] to-[#cecece]">
            <svg viewBox="0 0 9 6" className="h-[6px] w-[9px]"><path d="M1 0l3 3-3 3M5 0l3 3-3 3" fill="none" stroke="#000" strokeWidth="1.500" /></svg>
            <Caret />
          </button>
        </div>
      </div>
      <div className="flex h-[30px] items-center border-b border-[#bbb] bg-gradient-to-b from-[#bcbcbc] via-[#d0d0d0] to-[#dcdcdc] pl-[5px]">
        <FilterSelect label="类型过滤器" value="没有选择过滤器" className="w-[144px]" />
        <FilterSelect label="选择范围" value="仅在工作部件内部" className="mr-[3px] ml-[7px] w-[152px]" />
        <Tools items="chainGray | selFilter" />
        <button aria-label="filter options" className="flex h-full w-[7px] items-center"><Caret /></button>
        <Tools items="back solidGray arrowTarget hand | dashRect v | snapMove snapEnd snapMid snapCurve snapCross snapCenter snapQuad snapPlus snapOn snapFace snapPoint | cubePink" />
        <button aria-label="selection bar options" className="ml-auto flex h-full w-[17px] items-end justify-center pb-[7px]"><Caret /></button>
      </div>
    </>
  )
}

function StatusLine() {
  return (
    <div className="flex h-[22px] items-center border-b border-[#a0a0a0] bg-[#d9d9d9] font-bold">
      <p className="w-[47%] pl-[3px] text-[13px]">输入一个旋转角度或指定一个新的旋转轴</p>
      <span className="h-full flex-1 border-l border-[#b4b4b4] shadow-[inset_1px_0_0_#fff]" />
      <span className="h-full w-[21px] border-l border-[#b4b4b4] shadow-[inset_1px_0_0_#fff]" />
      <span className="h-full w-[35px] border-l border-[#b4b4b4] shadow-[inset_1px_0_0_#fff]" />
      <span className="flex h-full w-[23px] items-center justify-center border-l border-[#b4b4b4] shadow-[inset_1px_0_0_#fff]">
        <Glyph name="fullView" />
      </span>
    </div>
  )
}

const PITCH = 70

function rackPath(): string {
  let d = 'M35 772H41'
  for (let i = 0; i < 14; i++) {
    const x = 41 + i * PITCH
    d += `L${x + 20} 827Q${x + 23} 832 ${x + 26} 832.500H${x + 29}Q${x + 33} 832 ${x + 35} 827L${x + 55} 772H${x + 70}`
  }
  return d + 'L1041 827Q1043 832 1048.500 832.500V886.500H35z'
}

function ModelView() {
  return (
    <svg width="1243" height="786" viewBox="36 170 1243 786" className="absolute left-0 top-0 font-['Liberation_Sans',sans-serif]" role="img" aria-label="model1.prt">
      <defs>
        <linearGradient id="disc" x1="0" y1="212" x2="0" y2="822" gradientUnits="userSpaceOnUse">
          <stop offset="0" stopColor="#ee3235" />
          <stop offset="1" stopColor="#fb3d3d" />
        </linearGradient>
        <linearGradient id="side" x1="0" y1="212" x2="0" y2="822" gradientUnits="userSpaceOnUse">
          <stop offset="0" stopColor="#c52f32" />
          <stop offset="1" stopColor="#ee3a3a" />
        </linearGradient>
        <linearGradient id="bg" x1="0" y1="170" x2="0" y2="760" gradientUnits="userSpaceOnUse">
          <stop offset="0" stopColor="#b3b4b6" />
          <stop offset="1" stopColor="#e6e7e9" />
        </linearGradient>
        <clipPath id="bore"><circle cx="734" cy="523.500" r="79.500" /></clipPath>
      </defs>
      <path d="M734 170V956" stroke="#2f62cf" strokeWidth="2" />
      <circle cx="734" cy="516.500" r="304" fill="url(#side)" stroke="#333" />
      <circle cx="734" cy="523.500" r="297.500" fill="url(#disc)" stroke="#8a1c20" />
      <path d="M448 620A304 304 0 0 0 1020 620" fill="none" stroke="#4a1a1c" />
      <path d="M734 212V822" stroke="#93305f" strokeWidth="2" />
      {/* Bore: near and far edge circles */}
      <circle cx="734" cy="517" r="79.500" fill="#a53236" stroke="#333" />
      <circle cx="734" cy="523.500" r="79.500" fill="#cf3a3c" stroke="#8a1c20" />
      <path d="M654.500 517a79.500 79.500 0 0 1 159 0l-1 0a79 73 0 0 0-157 0z" fill="#a53236" />
      <path d="M734 438V603" stroke="#7c305a" strokeWidth="2" />
      <g clipPath="url(#bore)">
        <circle cx="734" cy="517" r="79.500" fill="url(#bg)" stroke="#333" />
        <path d="M734 440V596" stroke="#2f62cf" strokeWidth="2" />
      </g>
      <path d="M655 517a79 73 0 0 1 158 0" fill="none" stroke="#333" />
      <circle cx="734" cy="517" r="79.500" fill="none" stroke="#333" />
      <path d="M734 484V520" stroke="#0f0" strokeWidth="2" />
      <path d="M735 520.500H770" stroke="#00f" strokeWidth="2" />
      <g fill="#ff9a3c" fontSize="9">
        <text x="734" y="481">YC</text>
        <text x="734" y="521">XC</text>
        <text x="774" y="521">ZC</text>
      </g>
      <path d={rackPath()} fill="#39ff39" stroke="#333" />
      <path d="M91 872V900" stroke="#00d08a" strokeWidth="2" />
      <path d="M92 901H120" stroke="#3030ff" strokeWidth="2" />
      <rect x="88" y="898" width="6" height="6" rx="1" fill="#b0b0b0" />
      <text x="88" y="868" fontSize="8" fill="#00c888">Y</text>
      <text x="125" y="904" fontSize="9" fill="#3030ff">Z</text>
    </svg>
  )
}

function Divider() {
  return <hr className="h-[2px] border-t border-[#b4b4b4] bg-white" />
}

function WideButton({ children }: { children: ReactNode }) {
  return (
    <button className="mt-[2px] mb-[3px] block h-[28px] w-full rounded-[4px] border-2 border-[#8a8a8a] bg-[linear-gradient(#f0f0f0,#e2e2e2_45%,#c6c6c6_55%,#f4f4f4)] text-[12px]">
      {children}
    </button>
  )
}

function CheckRow({ label, initial }: { label: string; initial: boolean }) {
  const [checked, setChecked] = useState(initial)
  return (
    <label className="flex h-[23px] items-center gap-[2px] text-[12px]">
      <span className="relative flex h-4 w-4">
        <input
          type="checkbox"
          checked={checked}
          onChange={e => setChecked(e.target.checked)}
          className="h-4 w-4 appearance-none rounded-[3px] border-2 border-[#808080] bg-gradient-to-b from-[#f4f4f4] to-[#d4d4d4] checked:border-[#4a6f90] checked:from-[#d8eeff] checked:to-[#5fdcff]"
        />
        {checked && (
          <svg viewBox="0 0 16 16" className="pointer-events-none absolute inset-0 h-4 w-4" aria-hidden="true">
            <path d="M3 7l4 4 6-7" fill="none" stroke="#0a4a9c" strokeWidth="2.800" />
          </svg>
        )}
      </span>
      {label}
    </label>
  )
}

function AxisPicker() {
  return (
    <fieldset className="mx-auto h-[57px] w-[143px] border-2 border-[#9c9c9c] border-r-[#b4b4b4] border-b-[#b4b4b4] bg-[#d0d0d0] px-[3px]">
      <div className="pl-[2px] text-[13px] leading-[21px] font-bold">固定轴</div>
      <div className="flex gap-[4px]">
        <button aria-label="X 轴" className="flex h-[30px] w-[30px] items-center justify-center">
          <svg viewBox="0 0 22 22" className="h-[22px] w-[22px]"><path d="M8 6Q10 1 12 1q4 2 4 10t-4 10q-3 0-5-7" fill="none" stroke={NAVY} strokeWidth="1.700" /><path d="M4 9l3-6 4 5z" fill={NAVY} /><path d="M1 11h20" stroke="#f00" strokeWidth="2" /></svg>
        </button>
        <button aria-label="Y 轴" className="flex h-[30px] w-[30px] items-center justify-center rounded-[3px] border-2 border-[#b0703c] bg-[linear-gradient(#ffd9bf,#ffb583_45%,#f99448_50%,#ffe0b8)]">
          <svg viewBox="0 0 22 22" className="h-[22px] w-[22px] shrink-0"><path d="M5 15Q1 13 1 11q2-5 10-5t10 5q-1 4-7 4" fill="none" stroke={NAVY} strokeWidth="1.700" /><path d="M4 16l5-4v6z" fill={NAVY} /><path d="M12 1v20" stroke="#0f0" strokeWidth="2" /></svg>
        </button>
        <button aria-label="Z 轴" className="flex h-[30px] w-[30px] items-center justify-center">
          <svg viewBox="0 0 22 22" className="h-[22px] w-[22px]"><path d="M12 5Q7 1 4 4q-2 4 3 8M12 17q4 2 7 0 2-4-3-9" fill="none" stroke={NAVY} strokeWidth="1.600" /><path d="M9 7l6-4v5z" fill={NAVY} /><path d="M2 20L20 2" stroke="#00f" strokeWidth="2" /></svg>
        </button>
        <button aria-label="自由旋转" className="flex h-[30px] w-[30px] items-center justify-center">
          <svg viewBox="0 0 22 22" className="h-[22px] w-[22px]"><path d="M3 14Q0 7 7 3M9 2q6-1 8 3M19 8q3 7-4 11M13 20q-6 1-8-3" fill="none" stroke={NAVY} strokeWidth="2.400" /><path d="M14 7h7V1zM1 15h7l-6 6z" fill={NAVY} /></svg>
        </button>
      </div>
    </fieldset>
  )
}

function RotateDialog() {
  const [angle, setAngle] = useState(90)
  const tab = 'flex h-[22px] items-center border border-[#8a8a8a]'
  return (
    <section aria-label="旋转视图" className="absolute left-0 top-[-15px] z-10 w-[333px]">
      <div className="flex w-[168px]">
        <button aria-label="Previous" className={clsx(tab, 'w-[22px] justify-center bg-[#e4e4e4]')}>
          <svg viewBox="0 0 12 12" className="h-3 w-3"><path d="M9 2L3 6l6 4" fill="none" stroke="#555" strokeWidth="2" /></svg>
        </button>
        <button aria-label="Pin" className={clsx(tab, 'w-[21px] justify-center bg-[linear-gradient(#666,#3c3c3c_35%,#111_40%,#111)]')}>
          <svg viewBox="0 0 12 12" className="h-3 w-3"><path d="M2 2l6 6" stroke="#fff" strokeWidth="2" /><path d="M10 5v6H4z" fill="#fff" /></svg>
        </button>
        <h2 className={clsx(tab, 'flex-1 bg-[linear-gradient(#666,#3c3c3c_35%,#111_40%,#111)] pl-[4px] text-[17px] font-medium whitespace-nowrap text-white')}>旋转视图</h2>
        <button aria-label="Close dialog" className={clsx(tab, 'w-[21px] justify-center bg-[linear-gradient(#666,#3c3c3c_35%,#111_40%,#111)]')}>
          <svg viewBox="0 0 12 12" className="h-3 w-3"><path d="M1.500 2l9 8M10.500 2l-9 8" stroke="#fff" strokeWidth="2.600" /></svg>
        </button>
        <button aria-label="Next" className={clsx(tab, 'w-[21px] justify-center bg-[#e4e4e4]')}>
          <svg viewBox="0 0 12 12" className="h-3 w-3"><path d="M3 2l6 4-6 4" fill="none" stroke="#555" strokeWidth="2" /></svg>
        </button>
      </div>

      <div className="border border-[#8a8a8a] bg-gradient-to-b from-[#ebebeb] from-90% to-[#dedede] px-[9px] pt-[10px] pb-[11px] text-[12px]">
        <AxisPicker />
        <div className="mt-[4px]">
          <Divider />
          <WideButton>任意旋转轴</WideButton>
          <Divider />
          <WideButton>向上矢量</WideButton>
          <Divider />
        </div>

        <div className="px-[8px]">
          <output htmlFor="angle" className="block h-[24px] pl-[55%] leading-[24px]"><span className="block w-10 text-center">{angle}</span></output>
          <input
            id="angle"
            aria-label="角度"
            type="range"
            min={-360}
            max={360}
            value={angle}
            onChange={e => setAngle(Number(e.target.value))}
            className="block h-[20px] w-full appearance-none bg-[linear-gradient(transparent_8px,#909090_8px,#909090_10px,#fff_10px,#fff_11px,transparent_11px)] [&::-webkit-slider-thumb]:h-[18px] [&::-webkit-slider-thumb]:w-[9px] [&::-webkit-slider-thumb]:appearance-none [&::-webkit-slider-thumb]:rounded-t-[5px] [&::-webkit-slider-thumb]:rounded-b-[2px] [&::-webkit-slider-thumb]:border-2 [&::-webkit-slider-thumb]:border-[#3f6f90] [&::-webkit-slider-thumb]:bg-[linear-gradient(#e8f8ff,#bfeaff_50%,#58d4f4)]"
          />
        </div>
        <div className="flex h-[22px] items-center justify-between pl-[5px]">
          <span>-360</span>
          <span>360</span>
        </div>
        <div className="flex h-[27px] items-center justify-between">
          <label htmlFor="step">角度增量</label>
          <input
            id="step"
            defaultValue="90. 00000"
            className="h-[22px] w-[82px] rounded-[3px] border-2 border-[#808080] bg-white pl-[11px] font-['Noto_Sans_CJK_SC',sans-serif] text-[16px] leading-[18px] font-light"
          />
        </div>
        <Divider />
        <CheckRow label="连续旋转" initial={false} />
        <CheckRow label="锥形箭头显示" initial />
        <CheckRow label="锁定竖直轴" initial={false} />
        <Divider />
        <div className="flex h-[30px] items-center justify-between">
          <label htmlFor="orient">方位</label>
          <div className="flex h-[24px] w-[86px] rounded-[3px] border-2 border-[#808080] bg-white">
            <select id="orient" className="min-w-0 flex-1 appearance-none pl-[2px] text-[12px]">
              <option>无更改</option>
            </select>
            <svg viewBox="0 0 16 20" className="h-5 w-4 bg-gradient-to-b from-[#3d7fd6] to-[#9fd4ff]" aria-hidden="true">
              <path d="M2 7h12l-6 7z" fill="#111" />
            </svg>
          </div>
        </div>
        <CheckRow label="定位后适合窗口" initial />
        <div className="-mx-[3px] mt-[6px]"><Divider /></div>
        <div className="mt-[3px] mr-[7px] flex justify-end gap-[7px]">
          <button className="h-[24px] w-[52px] rounded-[3px] border-2 border-[#5a7a4a] bg-[linear-gradient(#c8e6b8,#9ed286_45%,#6cc048_55%,#b6f48e)]">确定</button>
          <button className="h-[24px] w-[52px] rounded-[3px] border-2 border-[#808080] bg-[linear-gradient(#f0f0f0,#e2e2e2_45%,#c6c6c6_55%,#f0f0f0)] outline-1 -outline-offset-3 outline-black outline-dotted">应用</button>
          <button className="h-[24px] w-[52px] rounded-[3px] border-2 border-[#808080] bg-[linear-gradient(#f0f0f0,#e2e2e2_45%,#c6c6c6_55%,#f4f4f4)]">取消</button>
        </div>
      </div>
      <div className="h-[8px] rounded-b-[5px] bg-[#1c1c1c]" />
    </section>
  )
}

function BottomToolbar() {
  return (
    <div className="relative flex h-[28px] border-t border-white bg-gradient-to-b from-[#e4e4e4] to-[#cbcbcb]">
      <div className="flex items-center pl-[151px] shadow-[inset_-1px_0_0_#b4b4b4]">
        <Tools items="asmAdd asmStar asmTree asmFlat asmMove mirror constrain mirrorSave section asmTwo wrenchBox wrenchY | asmThree pathSq | boxGhost boxWindow chain hexGem chainInfo treeInfo | checkBox >" />
      </div>
      {/* Minimised information window */}
      <div className="absolute left-0 top-0 flex h-[27px] w-[160px] items-start rounded-t-[7px] border-2 border-b-0 border-[#5c6c7c] bg-gradient-to-r from-white via-[#e9f0ff] to-white pl-[6px] shadow-[2px_0_6px_#0006]">
        <span className="mt-[3px] w-4 text-center font-['Liberation_Serif',serif] text-[16px] leading-[18px] font-bold text-[#1010d8] italic">i</span>
        <span className="mt-[3px] ml-[5px] text-[12px] leading-[18px] whitespace-nowrap">信...</span>
        <div className="ml-auto mr-[5px] flex h-[19px] rounded-b-[4px] border border-t-0 border-[#8694a8] bg-[#ffffff80]">
          {['M3 3V1h8v8H9M1 3h8v8H1zM3.500 5.500h3v3h-3z', 'M1 2h10v8H1zM4 5h4v2H4z', 'M1 2h3l2 2.500L8 2h3L7.500 6 11 10H8L6 7.500 4 10H1l3.500-4z'].map((d, i) => (
            <button key={i} aria-label={['Restore', 'Maximize', 'Close'][i] + ' information'} className={clsx('flex items-center justify-center', i === 2 ? 'w-[46px]' : 'w-[27px] border-r border-[#8694a8]')}>
              <svg viewBox="0 0 12 12" className="h-3 w-3"><path d={d} fill="#fff" stroke="#4a5568" /></svg>
            </button>
          ))}
        </div>
      </div>
    </div>
  )
}

const appIcons: Record<string, ReactNode> = {
  calc: <><rect x="6" y="2" width="21" height="29" rx="1" fill="#e6eef8" stroke="#8aa0bc" /><rect x="8" y="4" width="17" height="9" fill="#fafcff" stroke="#aabbd0" /><path d="M8 4h17v2.500H8z" fill="#f2b257" /><path d="M20 8h2.500v4H20z" fill="none" stroke="#557" /><path d="M8 17h17M8 20.500h17M8 24h17M8 27.500h17" stroke="#6a84b4" strokeWidth="2.200" strokeDasharray="2.500 1.200" /><path d="M23 22h2.500v6.500H23z" fill="#f08a28" /></>,
  browser: <><circle cx="16" cy="17" r="13.500" fill="#54b81e" stroke="#e9f7dc" strokeWidth="1.500" /><path d="M9 18h14a7.500 7.500 0 1 0-2 5" fill="none" stroke="#fff" strokeWidth="3.500" /><path d="M4 28Q1 16 18 5q10-5 9 3-1-4-8 0Q5 17 6 29z" fill="#8be04a" stroke="#e9f7dc" strokeWidth=".8" /></>,
  nx: <svg viewBox="0 0 18 18" width="32" height="32">{globe}</svg>,
  explorer: <><path d="M3 4l9-1 2 3h15v22H3z" fill="#f1d66c" stroke="#b8962c" /><path d="M5 9h25v18H5z" fill="#fbeaa0" stroke="#c9a83c" strokeWidth=".8" /><path d="M5 4h4v2H5z" fill="#2a4" /><path d="M22 6h5v2h-5z" fill="#38c" /><path d="M8 31v-8q0-4 4-4h10q4 0 4 4v8h-4v-7h-10v7z" fill="#bfe6f6" stroke="#6fb0d0" /></>,
  vb: <><path d="M20 26l10-3-6 5h-5z" fill="#7b8791" /><path d="M8 9l16 3v16L8 25z" fill="#fff" stroke="#111" strokeWidth="1.300" /><path d="M8 8l16 3v3L8 11z" fill="#1fc4c4" stroke="#111" /></>,
  note: <><path d="M24 27l6 1-5 3z" fill="#efd98a" /><path d="M12 4l15-1 3 25-9 2z" fill="#eef3f3" stroke="#8aa" strokeWidth=".7" /><path d="M10 5l16 0-4 23L2 25z" fill="#7cc4ce" /><path d="M10 5h9L8 26l-6-1z" fill="#bfe9ee" /><path d="M10 4h17" stroke="#777" strokeWidth="2.500" strokeDasharray="1.500 1" /></>,
  red: <><rect x="3" y="3" width="27" height="27" rx="1" fill="#c83c34" stroke="#8c1a16" /><rect x="6" y="6" width="21" height="21" fill="#d9564c" stroke="#ffd8d0" strokeWidth="1.500" /><path d="M9 24l7-8 4 8z" fill="#fff" /><path d="M13 18L24 8M19 17l6 7" stroke="#fff" strokeWidth="2.500" /><circle cx="12" cy="12" r="3" fill="#fff" /></>,
  m: <><path d="M4 3l8 6M27 3l-6 6M4 31l8-8" stroke="#1590d4" strokeWidth="3.500" /><circle cx="16" cy="14" r="9" fill="none" stroke="#27a9e8" strokeWidth="4" /><circle cx="17" cy="13" r="4" fill="none" stroke="#bfe8ff" strokeWidth="1.600" /><text x="16" y="29" fontSize="12" fontWeight="bold" fill="#f59a1c">M</text></>,
}

const tasks = ['calc', 'browser+', '*nx', 'explorer+', 'vb', 'note', 'vb', 'red', 'm', 'vb', 'vb', 'note']

function TaskGrip() {
  return <span className="block h-[30px] w-[9px] shrink-0 bg-[radial-gradient(circle,#0f3358_1px,transparent_1px)] bg-[length:3px_4px]" />
}

function Taskbar() {
  return (
    <footer className="flex h-[40px] items-center border-t border-[#15385c] bg-[linear-gradient(90deg,#2474a8,#2f83b8_25%,#2b7cc0_55%,#2468a8_70%,#1d4f88_75%,#1d4f88)] text-white">
      <button aria-label="Start" className="ml-[8px] h-[38px] w-[38px] shrink-0">
        <svg viewBox="0 0 38 38" className="h-[38px] w-[38px]">
          <circle cx="19" cy="19" r="17.500" fill="#195486" stroke="#9cc3dc" strokeWidth="1.200" />
          <path d="M3 18a16 16 0 0 1 32 0q-16 5-32 0z" fill="#7fb3d6" opacity=".65" />
          <path d="M10 10q5-3 9-1l-2 9q-4-2-9 0z" fill="#e8622c" />
          <path d="M20 10q5 3 10 0l-3 9q-4 2-9 0z" fill="#8cc63c" />
          <path d="M7 20q5-2 9 0l-2 9q-4-3-9-1z" fill="#3a9fe0" />
          <path d="M17 21q5 2 9 0l-2 9q-5 2-9-1z" fill="#fbc62c" />
        </svg>
      </button>
      <button aria-label="Launcher" className="ml-[23px] h-[32px] w-[32px] shrink-0">
        <svg viewBox="0 0 32 32" className="h-[32px] w-[32px]">
          <circle cx="24" cy="9" r="7" fill="#3f97ee" />
          <circle cx="23" cy="23" r="7.500" fill="#e0402c" />
          <circle cx="9" cy="23" r="7.500" fill="#f6c21c" />
          <circle cx="9" cy="9" r="7.500" fill="#7fce2f" />
          <circle cx="17" cy="7" r="4.500" fill="#2f83b8" />
          <path d="M17 11a7 7 0 0 1 7-9 7 7 0 0 1 1 14q-6 0-8-5z" fill="#3f97ee" />
          <path d="M2 22q6 3 10-4 5 2 4 8" fill="none" stroke="#2f83b8" strokeWidth="1.200" />
        </svg>
      </button>
      <span className="ml-[17px]"><TaskGrip /></span>
      <button aria-label="Paint" className="mr-[17px] ml-[20px] h-[34px] w-[34px] shrink-0">
        <svg viewBox="0 0 34 34" className="h-[34px] w-[34px]">
          <path d="M3 22Q4 9 18 8q12 1 10 10-2 3-7 3-4 1-2 5 0 5-7 4-9-1-9-8z" fill="#e8f0f6" stroke="#9ab" />
          <circle cx="9" cy="21" r="2.500" fill="#d9412c" /><circle cx="13" cy="14" r="2.500" fill="#3aa83a" /><circle cx="20" cy="12" r="2.500" fill="#f0b41c" /><circle cx="12" cy="27" r="2" fill="#3a70d0" />
          <path d="M29 5l-10 27" stroke="#c8741c" strokeWidth="3" /><path d="M26 9l-1-7q4-2 7 0z" fill="#b08858" />
        </svg>
      </button>
      <div className="grid max-w-[722px] flex-1 grid-cols-12 gap-[3px]">
        {tasks.map((task, i) => {
          const active = task.startsWith('*')
          const stacked = task.endsWith('+')
          return (
            <div key={i} className="flex gap-[1px]">
              <button
                aria-label={task.replace(/[*+]/, '')}
                className={clsx(
                  'flex h-[38px] min-w-0 flex-1 items-center justify-center rounded-[3px] border border-[#9cc8e4] shadow-[0_0_0_1px_#1a4a78]',
                  active ? 'bg-gradient-to-b from-[#d4e8f2] to-[#6fa9cc]' : 'bg-[linear-gradient(165deg,#82b8dc,#5a9fd0_40%,#3584c0_42%,#3c8cc8)]',
                )}
              >
                <svg viewBox="0 0 33 33" className="h-[32px] w-[32px]">{appIcons[task.replace(/[*+]/, '')]}</svg>
              </button>
              {stacked && <span className="h-[38px] w-[3px] rounded-r-[3px] border-r border-[#9cc8e4]" />}
            </div>
          )
        })}
      </div>
      <div className="ml-auto flex h-full items-center">
        <TaskGrip />
        <span className="ml-[5px] text-[12px] whitespace-nowrap">桌面</span>
        <svg viewBox="0 0 18 18" className="mb-[8px] ml-[6px] h-[18px] w-[18px]"><path d="M1 3h6l2 2h7v11H1z" fill="#f1d66c" stroke="#c9a83c" /><path d="M4 17v-5q0-2 2-2h7q3 0 3 2v5h-3v-4H7v4z" fill="#7fd0ec" /></svg>
        <span className="mb-[8px] ml-[4px] w-[4px] text-[12px]">J</span>
        <svg viewBox="0 0 9 6" className="mb-[22px] ml-[5px] h-[6px] w-[9px]"><path d="M1 0l3 3-3 3M5 0l3 3-3 3" fill="none" stroke="#fff" strokeWidth="1.500" /></svg>
        <span className="ml-[9px]"><TaskGrip /></span>
        <svg viewBox="0 0 16 14" className="ml-[9px] h-[14px] w-[16px]"><rect x=".5" y="5.500" width="15" height="8" fill="#555" stroke="#ddd" /><path d="M2 8h12M2 11h12" stroke="#eee" strokeWidth="1.500" strokeDasharray="1.500 1" /><path d="M3 5q1-4 5-2t6-2" fill="none" stroke="#ccc" /></svg>
        <span className="ml-[7px] flex h-[15px] w-[15px] items-center justify-center rounded-full border border-[#c8d4f4] bg-[#1c2cae] text-[11px] font-bold">?</span>
        <svg viewBox="0 0 10 18" className="mb-[4px] ml-[9px] h-[18px] w-[10px]"><path d="M3.500 1h6v4h-6zM1 4h5v4H1z" fill="#1d4f88" stroke="#fff" /><path d="M2 14h6l-3 3z" fill="#fff" /></svg>
        <svg viewBox="0 0 8 5" className="mt-[4px] ml-[10px] h-[4px] w-[7px]"><path d="M0 5h8L4 0z" fill="#fff" /></svg>
        <svg viewBox="0 0 18 18" className="ml-[12px] h-[17px] w-[17px]"><circle cx="9" cy="9" r="8" fill="#e9dc2c" /><path d="M9 1a8 8 0 0 1 7 11q-3 0-4-5zM2 13q5 0 8-3l2 6q-6 3-10-3z" fill="#f4e83c" stroke="#b8b01c" strokeWidth=".5" /><circle cx="9" cy="9" r="4.500" fill="#249a3a" /><path d="M9 6v6M6 9h6" stroke="#fff" strokeWidth="2" /></svg>
        <svg viewBox="0 0 16 16" className="ml-[8px] h-[16px] w-[16px]"><path d="M1 5h3l4-4v14l-4-4H1z" fill="#fff" /><path d="M10 5q2 3 0 6M12 3q4 5 0 10" fill="none" stroke="#dfe8f4" /></svg>
        <time className="w-[98px] px-[15px] text-center text-[12px] leading-[18px] whitespace-nowrap">
          <span className="block">14:28</span>
          <span className="flex justify-center">2015-04-23</span>
        </time>
        <button aria-label="Show desktop" className="h-full w-[14px] border border-[#7d9cc0] bg-gradient-to-b from-[#5c7da4] to-[#234a78]" />
      </div>
    </footer>
  )
}

export default function App() {
  return (
    <div className="flex min-h-screen flex-col overflow-hidden bg-[#d9d9d9] font-['Open_Sans','Noto_Sans_CJK_SC',sans-serif] text-black">
      <TitleBar />
      <MenuBar />
      <Toolbars />
      <StatusLine />
      <div className="h-[15px] border-b-2 border-[#6e6e6e] bg-[linear-gradient(#bdbdbd_4px,#888_4px,#888_5px,#f0f0f0_6px,#c8c8c8_10px,#b4b4b4)]" />
      <main className="relative flex min-h-[600px] flex-1">
        <aside className="w-[28px] bg-[linear-gradient(90deg,#b6b6b6,#b0b0b0)]" />
        <div className="w-[8px] border-x-2 border-[#8c8c8c] bg-[#f0f0f0]" />
        <div className="relative flex-1 overflow-hidden border-r border-white bg-[linear-gradient(#b3b4b6,#e6e7e9_75%,#e7e8ea)]">
          <ModelView />
        </div>
        <RotateDialog />
      </main>
      <BottomToolbar />
      <Taskbar />
    </div>
  )
}
